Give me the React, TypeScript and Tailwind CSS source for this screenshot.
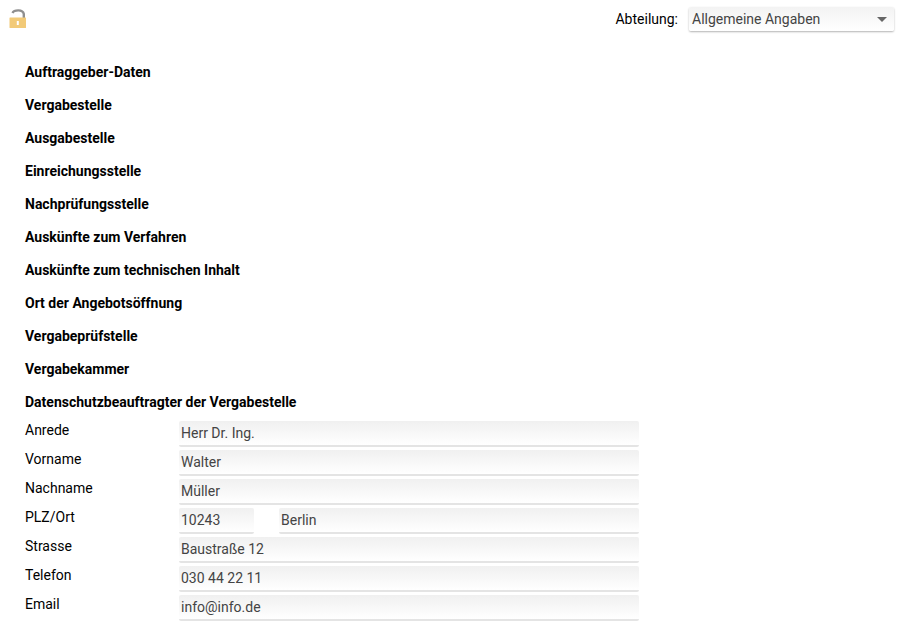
const sections = [
  "Auftraggeber-Daten",
  "Vergabestelle",
  "Ausgabestelle",
  "Einreichungsstelle",
  "Nachprüfungsstelle",
  "Auskünfte zum Verfahren",
  "Auskünfte zum technischen Inhalt",
  "Ort der Angebotsöffnung",
  "Vergabeprüfstelle",
  "Vergabekammer",
  "Datenschutzbeauftragter der Vergabestelle",
];

const fields = [
  { label: "Anrede", value: "Herr Dr. Ing." },
  { label: "Vorname", value: "Walter" },
  { label: "Nachname", value: "Müller" },
  { label: "PLZ/Ort", value: "10243", city: "Berlin" },
  { label: "Strasse", value: "Baustraße 12" },
  { label: "Telefon", value: "030 44 22 11" },
  { label: "Email", value: "info@info.de" },
];

function LockIcon() {
  return (
    <svg width="18" height="20" viewBox="0 0 18 20" aria-hidden="true">
      <path d="M3.5 4 C5 0.8 13.8 0 14.8 5 V11" fill="none" stroke="#8f8f8f" strokeWidth="2.4" />
      <rect x="0.5" y="8.5" width="16.5" height="10.5" rx="0.5" fill="#f2ca78" />
      <rect x="7.8" y="12" width="2" height="4" fill="#ffffff" />
    </svg>
  );
}

function TextBox({ value, className }: { value: string; className: string }) {
  return (
    <div
      className={`h-[26px] rounded-[2px] border-b-2 border-[#e4e4e4] bg-gradient-to-b from-[#f0f0f0] to-[#ffffff] pl-[2px] text-[14px] leading-[25px] text-[#444444] ${className}`}
    >
      {value}
    </div>
  );
}

export default function App() {
  return (
    <div className="h-[637px] w-[908px] overflow-hidden bg-white font-['Roboto',sans-serif] text-black">
      <div className="flex h-[39px] items-start justify-between pl-[9px] pr-[14px]">
        <div className="pt-[9px]">
          <LockIcon />
        </div>
        <div className="flex items-center gap-[11px] pt-[7px]">
          <span className="text-[14px]">Abteilung:</span>
          <div className="flex h-[24px] w-[205px] items-center justify-between rounded-[2px] bg-gradient-to-b from-[#f3f3f3] to-white pl-[3px] pr-[7px] text-[14px] text-[#444444] shadow-[0_1px_2px_rgba(0,0,0,0.3)]">
            <span>Allgemeine Angaben</span>
            <span className="h-0 w-0 border-x-[5px] border-t-[5px] border-x-transparent border-t-[#666666]" />
          </div>
        </div>
      </div>

      <div className="flex flex-col pl-[25px] pt-[17px]">
        {sections.map((title) => (
          <div key={title} className="h-[33px] text-[14px] font-bold leading-[33px]">
            {title}
          </div>
        ))}
      </div>

      <div className="flex flex-col gap-[3px] pl-[25px] pt-[2px]">
        {fields.map((field) => (
          <div key={field.label} className="flex h-[26px]">
            <div className="w-[154px] text-[14px] leading-[18px]">{field.label}</div>
            {field.city ? (
              <div className="flex gap-[25px]">
                <TextBox value={field.value} className="w-[75px]" />
                <TextBox value={field.city} className="w-[360px]" />
              </div>
            ) : (
              <TextBox value={field.value} className="w-[460px]" />
            )}
          </div>
        ))}
      </div>
    </div>
  );
}
